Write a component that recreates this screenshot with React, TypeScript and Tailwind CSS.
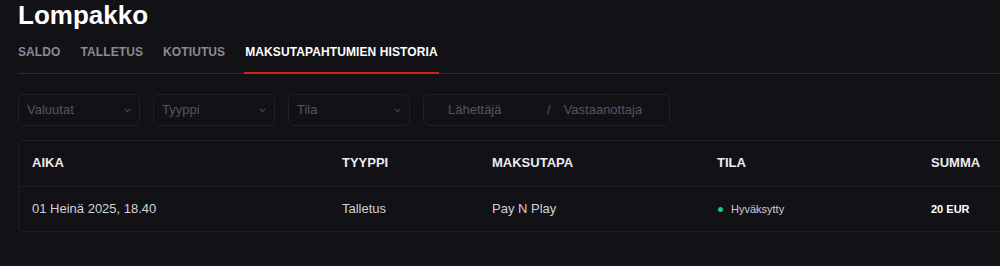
import React from "react";

const Chevron = () => (
  <svg width="7" height="5" viewBox="0 0 7 5" fill="none" className="shrink-0">
    <path d="M1 1.2 L3.5 3.6 L6 1.2" stroke="#4a4a52" strokeWidth="1.1" strokeLinecap="round" strokeLinejoin="round" />
  </svg>
);

const Select = ({ label }: { label: string }) => (
  <div className="flex h-[32px] w-[122px] items-center justify-between rounded-[6px] border border-[#202026] bg-[#111116] pl-[8px] pr-[8px] text-[13px] text-[#55555c]">
    <span>{label}</span>
    <Chevron />
  </div>
);

export default function App() {
  const tabs = ["SALDO", "TALLETUS", "KOTIUTUS", "MAKSUTAPAHTUMIEN HISTORIA"];
  const cols = "grid grid-cols-[310px_150px_225px_214px_1fr]";
  return (
    <div
      className="h-[266px] w-[1000px] overflow-hidden bg-[#111116] pl-[18px]"
      style={{ fontFamily: '"Liberation Sans", Arial, sans-serif' }}
    >
      <h1 className="text-[26px] font-bold leading-[30px] text-white">Lompakko</h1>

      <div className="flex gap-[20px] border-b border-[#2a2a30] pt-[14px]">
        {tabs.map((t, i) => {
          const active = i === tabs.length - 1;
          return (
            <div key={t} className="relative">
              <span
                className={`block pb-[13px] text-[12px] font-bold leading-[16px] tracking-[0.1px] ${
                  active ? "text-white" : "text-[#8a8a90]"
                }`}
              >
                {t}
              </span>
              {active && (
                <div className="absolute bottom-[-1px] left-[-1px] right-[-1px] h-[2px] bg-[#d71f14]" />
              )}
            </div>
          );
        })}
      </div>

      <div className="mt-[20px] flex gap-[13px]">
        <Select label="Valuutat" />
        <Select label="Tyyppi" />
        <Select label="Tila" />
        <div className="flex h-[32px] w-[247px] items-center rounded-[6px] border border-[#202026] bg-[#111116] pl-[24px] text-[13px] text-[#55555c]">
          <span className="w-[99px]">Lähettäjä</span>
          <span>/</span>
          <span className="ml-[13px]">Vastaanottaja</span>
        </div>
      </div>

      <div className="mt-[14px] w-[1020px] rounded-[4px] border border-[#1d1d23]">
        <div className={`${cols} border-b border-[#1d1d23] text-[13px] font-bold leading-[20px] text-[#ececef]`}>
          <div className="pb-[13px] pt-[12px] pl-[13px]">AIKA</div>
          <div className="pb-[13px] pt-[12px] pl-[13px]">TYYPPI</div>
          <div className="pb-[13px] pt-[12px] pl-[13px]">MAKSUTAPA</div>
          <div className="pb-[13px] pt-[12px] pl-[13px]">TILA</div>
          <div className="pb-[13px] pt-[12px] pl-[13px]">SUMMA</div>
        </div>
        <div className={`${cols} items-center text-[13px] leading-[20px] text-[#d2d2d6]`}>
          <div className="py-[12px] pl-[13px]">01 Heinä 2025, 18.40</div>
          <div className="py-[12px] pl-[13px]">Talletus</div>
          <div className="py-[12px] pl-[13px]">Pay N Play</div>
          <div className="flex items-center gap-[8px] py-[12px] pl-[14px] text-[11px] text-[#cfcfd3]">
            <span className="h-[5px] w-[5px] rounded-full bg-[#14c98c]" />
            <span>Hyväksytty</span>
          </div>
          <div className="py-[12px] pl-[13px] text-[11px] font-bold text-white">20 EUR</div>
        </div>
      </div>
    </div>
  );
}
